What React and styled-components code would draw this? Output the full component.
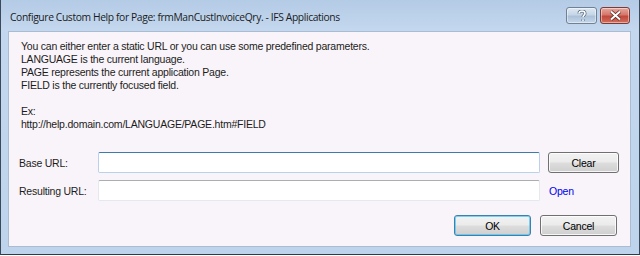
import styled, { createGlobalStyle } from "styled-components";

const GlobalStyle = createGlobalStyle`
  html, body {
    margin: 0;
    padding: 0;
    background: #ffffff;
  }
  body {
    font-family: "Liberation Sans", Arial, sans-serif;
  }
`;

const Window = styled.div`
  width: 640px;
  height: 255px;
  box-sizing: border-box;
  display: flex;
  flex-direction: column;
  background: linear-gradient(#b4cbe6, #c3d8ee 30px, #bed4ec);
  border-left: 1px solid #3b4a5a;
  border-right: 1px solid #3b4a5a;
  border-bottom: 1px solid #2f3c48;
  box-shadow: 0 1px 0 #3fd2ee;
`;

const TitleBar = styled.div`
  height: 31px;
  display: flex;
  align-items: center;
  padding: 0 9px 0 9px;
  gap: 3px;
`;

const Title = styled.div`
  flex: 1;
  font-family: "Open Sans", sans-serif;
  font-size: 10.3px;
  letter-spacing: -0.38px;
  color: #1b1b1b;
  padding-top: 3px;
`;

const CaptionButton = styled.div`
  width: ${(p) => (p.wide ? "30px" : "31px")};
  height: 17px;
  box-sizing: border-box;
  border: 1px solid ${(p) => (p.danger ? "#7a3a36" : "#6f8193")};
  border-radius: 3px;
  display: flex;
  align-items: center;
  justify-content: center;
  background: ${(p) =>
    p.danger
      ? "linear-gradient(#e6a79d, #d6776b 45%, #c1493b 55%, #d26f5e)"
      : "linear-gradient(#dde8f3, #c6d6e7 45%, #acc1d8 55%, #c4d6ea)"};
  box-shadow: inset 0 0 0 1px rgba(255, 255, 255, 0.45);
`;

const Content = styled.div`
  flex: 1;
  margin: 0 8px 7px 7px;
  background: #f9f4f9;
  border: 1px solid #a9bcd2;
  display: flex;
  flex-direction: column;
  font-family: "Liberation Sans", Arial, sans-serif;
  font-size: 10.5px;
  letter-spacing: -0.22px;
  color: #1c1c1c;
`;

const Info = styled.div`
  padding: 8px 12px 0 12px;
  line-height: 13px;
  white-space: pre;
`;

const FormGrid = styled.div`
  margin-top: 21px;
  display: grid;
  grid-template-columns: 71px 442px 71px;
  column-gap: 8px;
  row-gap: 7px;
  padding-left: 10px;
  align-items: center;
`;

const Label = styled.div``;

const TextBox = styled.div`
  height: 21px;
  box-sizing: border-box;
  background: #ffffff;
  border: 1px solid ${(p) => (p.focused ? "#b7d2ea" : "#e3e9ef")};
  border-top-color: ${(p) => (p.focused ? "#3d7bad" : "#abadb3")};
  border-radius: 2px;
`;

const Button = styled.div`
  height: 21px;
  width: ${(p) => p.width || 77}px;
  box-sizing: border-box;
  border: 1px solid ${(p) => (p.primary ? "#3c7fb1" : "#707070")};
  border-radius: 3px;
  display: flex;
  align-items: center;
  justify-content: center;
  color: #000;
  background: linear-gradient(#f2f2f2, #ebebeb 48%, #dddddd 52%, #cfcfcf);
  box-shadow: inset 0 0 0 1px
    ${(p) => (p.primary ? "rgba(72, 196, 240, 0.7)" : "rgba(255, 255, 255, 0.8)")};
`;

const Link = styled.div`
  color: #0000ee;
  padding-left: 1px;
`;

const Footer = styled.div`
  margin-top: auto;
  margin-bottom: 10px;
  display: flex;
  justify-content: flex-end;
  gap: 9px;
  padding-right: 13px;
`;

const infoText = `You can either enter a static URL or you can use some predefined parameters.
LANGUAGE is the current language.
PAGE represents the current application Page.
FIELD is the currently focused field.

Ex:
http://help.domain.com/LANGUAGE/PAGE.htm#FIELD`;

export default function App() {
  return (
    <>
      <GlobalStyle />
      <Window>
        <TitleBar>
          <Title>Configure Custom Help for Page: frmManCustInvoiceQry. - IFS Applications</Title>
          <CaptionButton>
            <svg width="10" height="12" viewBox="0 0 10 12">
              <path
                d="M2 3.6 C2 1.6 3.4 1 5 1 C6.8 1 8 2 8 3.4 C8 5 6 5.3 6 7 M6 9.2 V11"
                fill="none"
                stroke="#4f6478"
                strokeWidth="3"
              />
              <path
                d="M2 3.6 C2 1.6 3.4 1 5 1 C6.8 1 8 2 8 3.4 C8 5 6 5.3 6 7 M6 9.2 V11"
                fill="none"
                stroke="#ffffff"
                strokeWidth="1.6"
              />
            </svg>
          </CaptionButton>
          <CaptionButton danger wide>
            <svg width="13" height="11" viewBox="0 0 13 11">
              <path d="M2 1.5 L11 9.5 M11 1.5 L2 9.5" stroke="#5a2a25" strokeWidth="3.6" />
              <path d="M2 1.5 L11 9.5 M11 1.5 L2 9.5" stroke="#ffffff" strokeWidth="2" />
            </svg>
          </CaptionButton>
        </TitleBar>
        <Content>
          <Info>{infoText}</Info>
          <FormGrid>
            <Label>Base URL:</Label>
            <TextBox focused />
            <Button width={71}>Clear</Button>
            <Label>Resulting URL:</Label>
            <TextBox />
            <Link>Open</Link>
          </FormGrid>
          <Footer>
            <Button primary>OK</Button>
            <Button>Cancel</Button>
          </Footer>
        </Content>
      </Window>
    </>
  );
}
